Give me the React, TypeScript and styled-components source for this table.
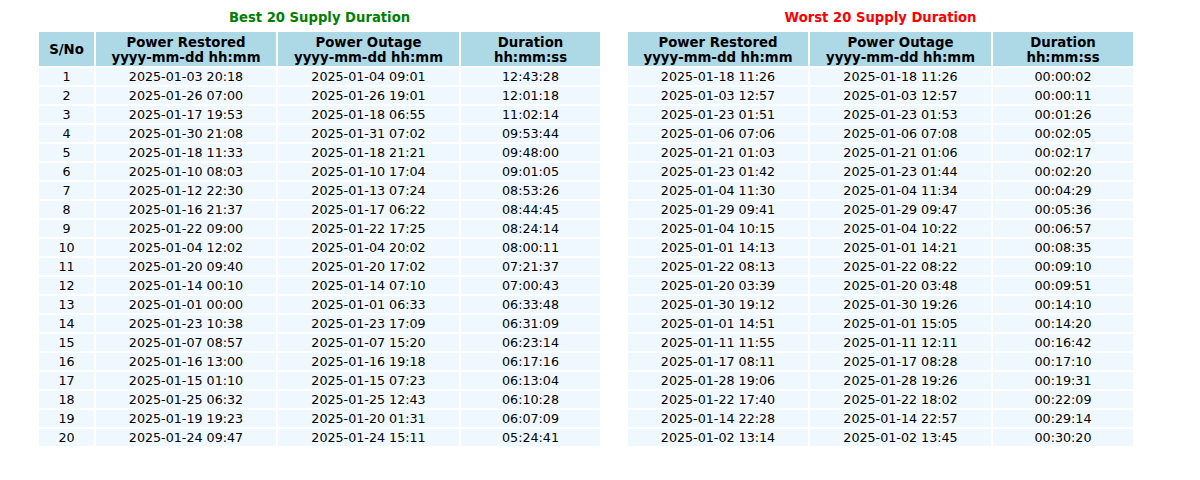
import React from "react";
import styled, { createGlobalStyle } from "styled-components";

const GlobalStyle = createGlobalStyle`
  html, body {
    margin: 0;
    padding: 0;
    background: #ffffff;
  }
  body {
    font-family: "DejaVu Sans", "Liberation Sans", sans-serif;
    color: #000000;
  }
`;

const Page = styled.div`
  width: 1200px;
  height: 480px;
  display: flex;
  gap: 28px;
  padding-left: 39px;
  box-sizing: border-box;
`;

const Section = styled.section`
  display: flex;
  flex-direction: column;
`;

const Title = styled.h2<{ $color: string }>`
  margin: 0;
  height: 32px;
  padding-top: 3px;
  box-sizing: border-box;
  display: flex;
  align-items: center;
  justify-content: center;
  font-size: 13.2px;
  font-weight: bold;
  color: ${(p) => p.$color};
`;

const Grid = styled.div<{ $cols: string }>`
  display: grid;
  grid-template-columns: ${(p) => p.$cols};
  grid-template-rows: 34px;
  grid-auto-rows: 17px;
  gap: 2px;
  background: #ffffff;
`;

const HeadCell = styled.div`
  background: #add8e6;
  display: flex;
  flex-direction: column;
  align-items: center;
  justify-content: center;
  padding-top: 1px;
  font-size: 13.3px;
  font-weight: bold;
  line-height: 15px;
  text-align: center;
  white-space: nowrap;
`;

const Cell = styled.div`
  background: #f0f8ff;
  display: flex;
  align-items: center;
  justify-content: center;
  font-size: 12.7px;
  line-height: 17px;
  white-space: nowrap;
`;

type Row = [string, string, string];

const best: Row[] = [
  ["2025-01-03 20:18", "2025-01-04 09:01", "12:43:28"],
  ["2025-01-26 07:00", "2025-01-26 19:01", "12:01:18"],
  ["2025-01-17 19:53", "2025-01-18 06:55", "11:02:14"],
  ["2025-01-30 21:08", "2025-01-31 07:02", "09:53:44"],
  ["2025-01-18 11:33", "2025-01-18 21:21", "09:48:00"],
  ["2025-01-10 08:03", "2025-01-10 17:04", "09:01:05"],
  ["2025-01-12 22:30", "2025-01-13 07:24", "08:53:26"],
  ["2025-01-16 21:37", "2025-01-17 06:22", "08:44:45"],
  ["2025-01-22 09:00", "2025-01-22 17:25", "08:24:14"],
  ["2025-01-04 12:02", "2025-01-04 20:02", "08:00:11"],
  ["2025-01-20 09:40", "2025-01-20 17:02", "07:21:37"],
  ["2025-01-14 00:10", "2025-01-14 07:10", "07:00:43"],
  ["2025-01-01 00:00", "2025-01-01 06:33", "06:33:48"],
  ["2025-01-23 10:38", "2025-01-23 17:09", "06:31:09"],
  ["2025-01-07 08:57", "2025-01-07 15:20", "06:23:14"],
  ["2025-01-16 13:00", "2025-01-16 19:18", "06:17:16"],
  ["2025-01-15 01:10", "2025-01-15 07:23", "06:13:04"],
  ["2025-01-25 06:32", "2025-01-25 12:43", "06:10:28"],
  ["2025-01-19 19:23", "2025-01-20 01:31", "06:07:09"],
  ["2025-01-24 09:47", "2025-01-24 15:11", "05:24:41"],
];

const worst: Row[] = [
  ["2025-01-18 11:26", "2025-01-18 11:26", "00:00:02"],
  ["2025-01-03 12:57", "2025-01-03 12:57", "00:00:11"],
  ["2025-01-23 01:51", "2025-01-23 01:53", "00:01:26"],
  ["2025-01-06 07:06", "2025-01-06 07:08", "00:02:05"],
  ["2025-01-21 01:03", "2025-01-21 01:06", "00:02:17"],
  ["2025-01-23 01:42", "2025-01-23 01:44", "00:02:20"],
  ["2025-01-04 11:30", "2025-01-04 11:34", "00:04:29"],
  ["2025-01-29 09:41", "2025-01-29 09:47", "00:05:36"],
  ["2025-01-04 10:15", "2025-01-04 10:22", "00:06:57"],
  ["2025-01-01 14:13", "2025-01-01 14:21", "00:08:35"],
  ["2025-01-22 08:13", "2025-01-22 08:22", "00:09:10"],
  ["2025-01-20 03:39", "2025-01-20 03:48", "00:09:51"],
  ["2025-01-30 19:12", "2025-01-30 19:26", "00:14:10"],
  ["2025-01-01 14:51", "2025-01-01 15:05", "00:14:20"],
  ["2025-01-11 11:55", "2025-01-11 12:11", "00:16:42"],
  ["2025-01-17 08:11", "2025-01-17 08:28", "00:17:10"],
  ["2025-01-28 19:06", "2025-01-28 19:26", "00:19:31"],
  ["2025-01-22 17:40", "2025-01-22 18:02", "00:22:09"],
  ["2025-01-14 22:28", "2025-01-14 22:57", "00:29:14"],
  ["2025-01-02 13:14", "2025-01-02 13:45", "00:30:20"],
];

const headers: [string, string][] = [
  ["Power Restored", "yyyy-mm-dd hh:mm"],
  ["Power Outage", "yyyy-mm-dd hh:mm"],
  ["Duration", "hh:mm:ss"],
];

function DurationTable({
  title,
  color,
  rows,
  withIndex,
}: {
  title: string;
  color: string;
  rows: Row[];
  withIndex?: boolean;
}) {
  const cols = withIndex ? "55px 180px 181px 139px" : "180px 181px 140px";
  return (
    <Section>
      <Title $color={color}>{title}</Title>
      <Grid $cols={cols}>
        {withIndex && <HeadCell>S/No</HeadCell>}
        {headers.map(([a, b]) => (
          <HeadCell key={a}>
            <span>{a}</span>
            <span>{b}</span>
          </HeadCell>
        ))}
        {rows.map((r, i) => (
          <React.Fragment key={i}>
            {withIndex && <Cell>{i + 1}</Cell>}
            {r.map((v, j) => (
              <Cell key={j}>{v}</Cell>
            ))}
          </React.Fragment>
        ))}
      </Grid>
    </Section>
  );
}

export default function App() {
  return (
    <>
      <GlobalStyle />
      <Page>
        <DurationTable title="Best 20 Supply Duration" color="#008000" rows={best} withIndex />
        <DurationTable title="Worst 20 Supply Duration" color="#ff0000" rows={worst} />
      </Page>
    </>
  );
}
